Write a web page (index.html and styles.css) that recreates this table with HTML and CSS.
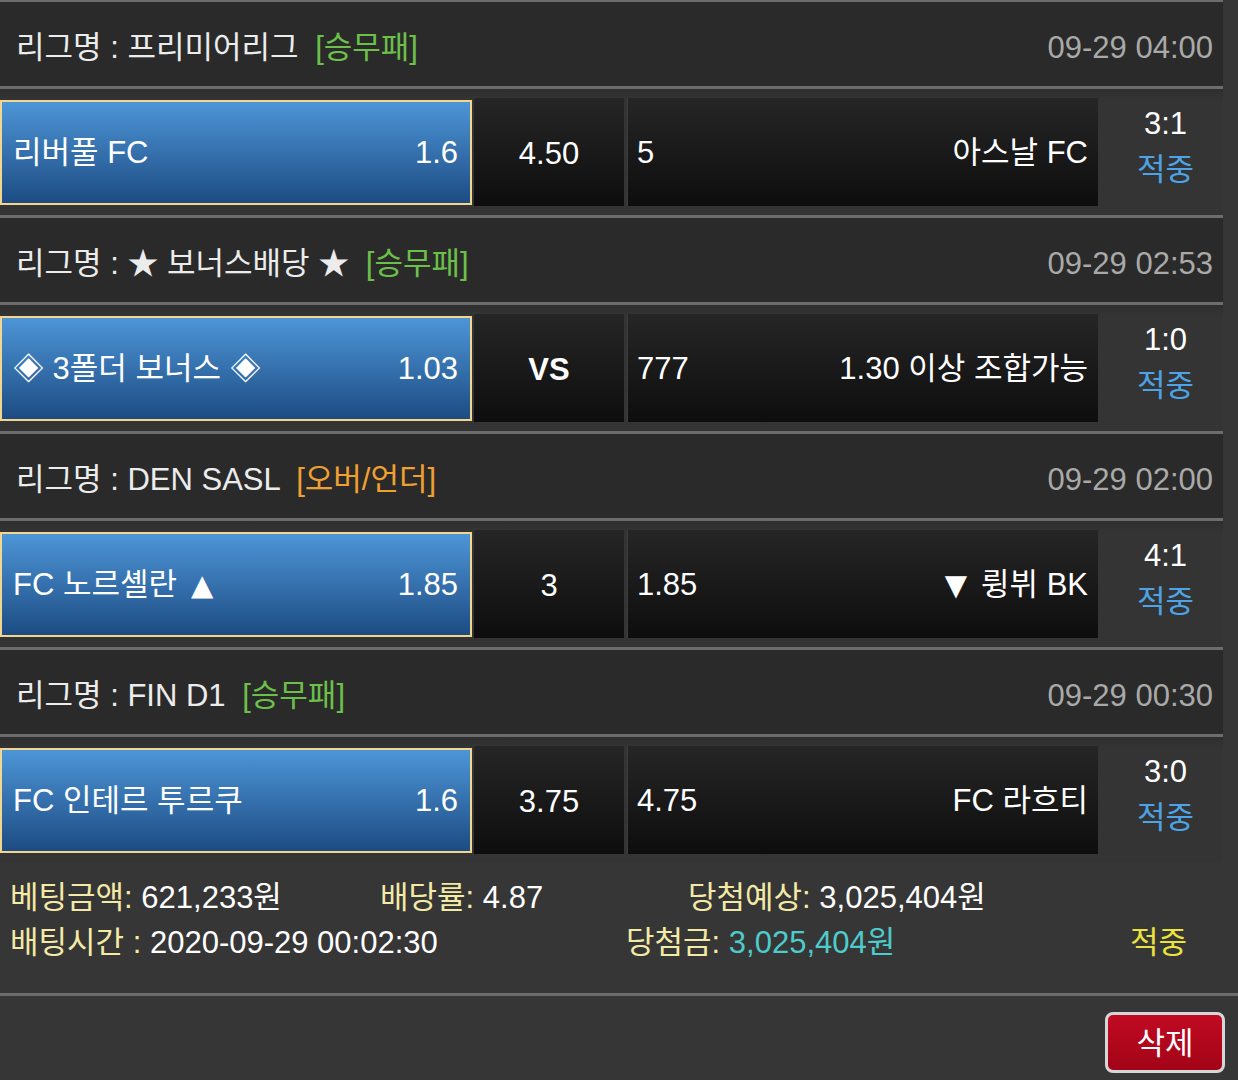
FILE: index.html
```html
<!DOCTYPE html>
<html lang="ko">
<head>
  <meta charset="UTF-8" />
  <title>배팅내역</title>
  <link rel="stylesheet" href="styles.css">
</head>
<body>
  <div class="list">
    <div class="group">
      <div class="league">
        <div class="league-name">리그명 : 프리미어리그 <span class="tag win">[승무패]</span></div>
        <div class="time">09-29 04:00</div>
      </div>
      <div class="match">
        <div class="home"><span>리버풀 FC</span><span>1.6</span></div>
        <div class="draw">4.50</div>
        <div class="away"><span>5</span><span>아스날 FC</span></div>
        <div class="score">3:1<br><span class="hit">적중</span></div>
      </div>
    </div>
    <div class="group">
      <div class="league">
        <div class="league-name">리그명 : ★ 보너스배당 ★ <span class="tag win">[승무패]</span></div>
        <div class="time">09-29 02:53</div>
      </div>
      <div class="match">
        <div class="home"><span>◈ 3폴더 보너스 ◈</span><span>1.03</span></div>
        <div class="draw vs">VS</div>
        <div class="away"><span>777</span><span>1.30 이상 조합가능</span></div>
        <div class="score">1:0<br><span class="hit">적중</span></div>
      </div>
    </div>
    <div class="group">
      <div class="league">
        <div class="league-name">리그명 : DEN SASL <span class="tag ou">[오버/언더]</span></div>
        <div class="time">09-29 02:00</div>
      </div>
      <div class="match">
        <div class="home"><span>FC 노르셸란<span class="arrow up">▲</span></span><span>1.85</span></div>
        <div class="draw">3</div>
        <div class="away"><span>1.85</span><span><span class="arrow down">▼</span>륑뷔 BK</span></div>
        <div class="score">4:1<br><span class="hit">적중</span></div>
      </div>
    </div>
    <div class="group last">
      <div class="league">
        <div class="league-name">리그명 : FIN D1 <span class="tag win">[승무패]</span></div>
        <div class="time">09-29 00:30</div>
      </div>
      <div class="match">
        <div class="home"><span>FC 인테르 투르쿠</span><span>1.6</span></div>
        <div class="draw">3.75</div>
        <div class="away"><span>4.75</span><span>FC 라흐티</span></div>
        <div class="score">3:0<br><span class="hit">적중</span></div>
      </div>
    </div>
  </div>

  <div class="summary">
    <div class="sum-row">
      <div class="c1"><span class="label">베팅금액:</span> 621,233원</div>
      <div class="c2"><span class="label">배당률:</span> 4.87</div>
      <div><span class="label">당첨예상:</span> 3,025,404원</div>
    </div>
    <div class="sum-row">
      <div class="c3"><span class="label">배팅시간 :</span> 2020-09-29 00:02:30</div>
      <div class="c4"><span class="label">당첨금:</span> <span class="won">3,025,404원</span></div>
      <div class="result">적중</div>
    </div>
  </div>

  <div class="actions">
    <button class="delete">삭제</button>
  </div>
</body>
</html>
```

FILE: styles.css
```css
body {
  margin: 0;
  background: #363636;
  color: #fff;
  font-family: "Liberation Sans", "Noto Sans CJK KR", sans-serif;
  font-size: 31px;
  width: 1238px;
  height: 1080px;
  overflow: hidden;
}
.list {
  width: 1223px;
  border-top: 2px solid #6c6c6c;
}
.league {
  background: #2a2a2a;
  display: flex;
  justify-content: space-between;
  align-items: center;
  padding: 8px 10px 0 16px;
  border-bottom: 3px solid #6c6c6c;
  box-sizing: border-box;
  height: 87px;
  line-height: 40px;
}
.league-name {
  color: #ececec;
}
.tag {
  margin-left: 8px;
}
.tag.win {
  color: #6cc04a;
}
.tag.ou {
  color: #f0a030;
}
.time {
  color: #a9a9a9;
}
.match {
  display: flex;
  align-items: center;
  height: 126px;
  background: linear-gradient(#2e2e2e, #343434 10px);
  border-bottom: 3px solid #6c6c6c;
}
.group.last .match {
  border-bottom: none;
}
.home {
  width: 472px;
  height: 105px;
  box-sizing: border-box;
  border: 2px solid #f0d68e;
  background: linear-gradient(#4d95d7, #1d4c83);
  display: flex;
  justify-content: space-between;
  align-items: center;
  padding: 2px 12px 0 11px;
  line-height: 40px;
}
.arrow {
  font-family: "DejaVu Sans", sans-serif;
  font-size: 29px;
}
.arrow.up {
  margin-left: 14px;
}
.arrow.down {
  margin-right: 14px;
}
.draw {
  width: 150px;
  height: 108px;
  margin-left: 2px;
  background: linear-gradient(#262626, #0d0d0d);
  display: flex;
  justify-content: center;
  align-items: center;
  padding-top: 4px;
  box-sizing: border-box;
}
.draw.vs {
  font-weight: bold;
}
.away {
  width: 471px;
  height: 108px;
  margin-left: 3px;
  border-left: 1px solid #3c3c3c;
  background: linear-gradient(#262626, #0d0d0d);
  display: flex;
  justify-content: space-between;
  align-items: center;
  padding: 2px 10px 0 9px;
  box-sizing: border-box;
  line-height: 40px;
}
.score {
  flex: 1;
  text-align: center;
  line-height: 46px;
  padding: 0 0 10px 10px;
}
.hit {
  color: #4ea3e6;
}
.summary {
  padding: 12px 0 28px 10px;
  border-bottom: 3px solid #6c6c6c;
  line-height: 45px;
}
.sum-row {
  display: flex;
}
.label {
  color: #f3eaa6;
}
.c1 {
  width: 370px;
}
.c2 {
  width: 308px;
}
.c3 {
  width: 616px;
}
.c4 {
  width: 504px;
}
.won {
  color: #4ecbcb;
}
.result {
  color: #ebe33e;
}
.actions {
  display: flex;
  justify-content: flex-end;
  padding: 16px 13px 0 0;
}
.delete {
  width: 120px;
  height: 61px;
  background: linear-gradient(#c00a22, #a30418);
  color: #fff;
  border: 3px solid #d6d6d6;
  border-radius: 8px;
  font-family: "Liberation Sans", "Noto Sans CJK KR", sans-serif;
  font-size: 31px;
  padding: 0 0 4px;
}
```
